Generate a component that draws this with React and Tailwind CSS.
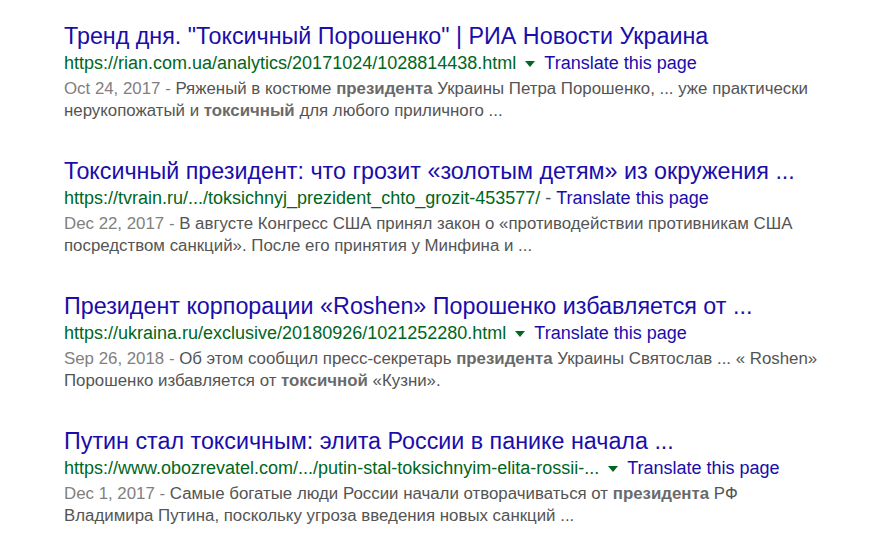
import React from 'react';

const results = [
  {
    title: 'Тренд дня. "Токсичный Порошенко" | РИА Новости Украина',
    url: 'https://rian.com.ua/analytics/20171024/1028814438.html',
    arrow: true,
    date: 'Oct 24, 2017',
    lines: [
      ['Ряженый в костюме ', <b key="b">президента</b>, ' Украины Петра Порошенко, ... уже практически'],
      ['нерукопожатый и ', <b key="b">токсичный</b>, ' для любого приличного ...'],
    ],
  },
  {
    title: 'Токсичный президент: что грозит «золотым детям» из окружения ...',
    url: 'https://tvrain.ru/.../toksichnyj_prezident_chto_grozit-453577/',
    arrow: false,
    date: 'Dec 22, 2017',
    lines: [
      ['В августе Конгресс США принял закон о «противодействии противникам США'],
      ['посредством санкций». После его принятия у Минфина и ...'],
    ],
  },
  {
    title: 'Президент корпорации «Roshen» Порошенко избавляется от ...',
    url: 'https://ukraina.ru/exclusive/20180926/1021252280.html',
    arrow: true,
    date: 'Sep 26, 2018',
    lines: [
      ['Об этом сообщил пресс-секретарь ', <b key="b">президента</b>, ' Украины Святослав ... « Roshen»'],
      ['Порошенко избавляется от ', <b key="b">токсичной</b>, ' «Кузни».'],
    ],
  },
  {
    title: 'Путин стал токсичным: элита России в панике начала ...',
    url: 'https://www.obozrevatel.com/.../putin-stal-toksichnyim-elita-rossii-...',
    arrow: true,
    date: 'Dec 1, 2017',
    lines: [
      ['Самые богатые люди России начали отворачиваться от ', <b key="b">президента</b>, ' РФ'],
      ['Владимира Путина, поскольку угроза введения новых санкций ...'],
    ],
  },
];

function Result({ r }) {
  return (
    <div>
      <a className="block text-[23.3px] leading-[26px] text-[#1a0dab] whitespace-nowrap">{r.title}</a>
      <div className="flex items-center text-[18px] leading-[24px] mt-[2px] whitespace-nowrap">
        <span className="text-[#006621]">{r.url}</span>
        {r.arrow ? (
          <span className="inline-block ml-[9px] mr-[9px] w-0 h-0 border-l-[5px] border-r-[5px] border-t-[6px] border-l-transparent border-r-transparent border-t-[#006621] mt-[1px]" />
        ) : (
          <span className="text-[#545454] mx-[5px]">-</span>
        )}
        <span className="text-[#1a0dab]">Translate this page</span>
      </div>
      <div className="mt-[3px] text-[16.85px] leading-[22px] text-[#545454] whitespace-nowrap [&_b]:text-[#6a6a6a] [&_b]:font-bold">
        <div>
          <span className="text-[#808080]">{r.date} - </span>
          {r.lines[0]}
        </div>
        <div>{r.lines[1]}</div>
      </div>
    </div>
  );
}

export default function App() {
  return (
    <div className="w-[889px] h-[548px] bg-white overflow-hidden pl-[64px] pt-[23px] flex flex-col gap-[36px] font-['Liberation_Sans',Arial,sans-serif]">
      {results.map((r, i) => (
        <Result key={i} r={r} />
      ))}
    </div>
  );
}
